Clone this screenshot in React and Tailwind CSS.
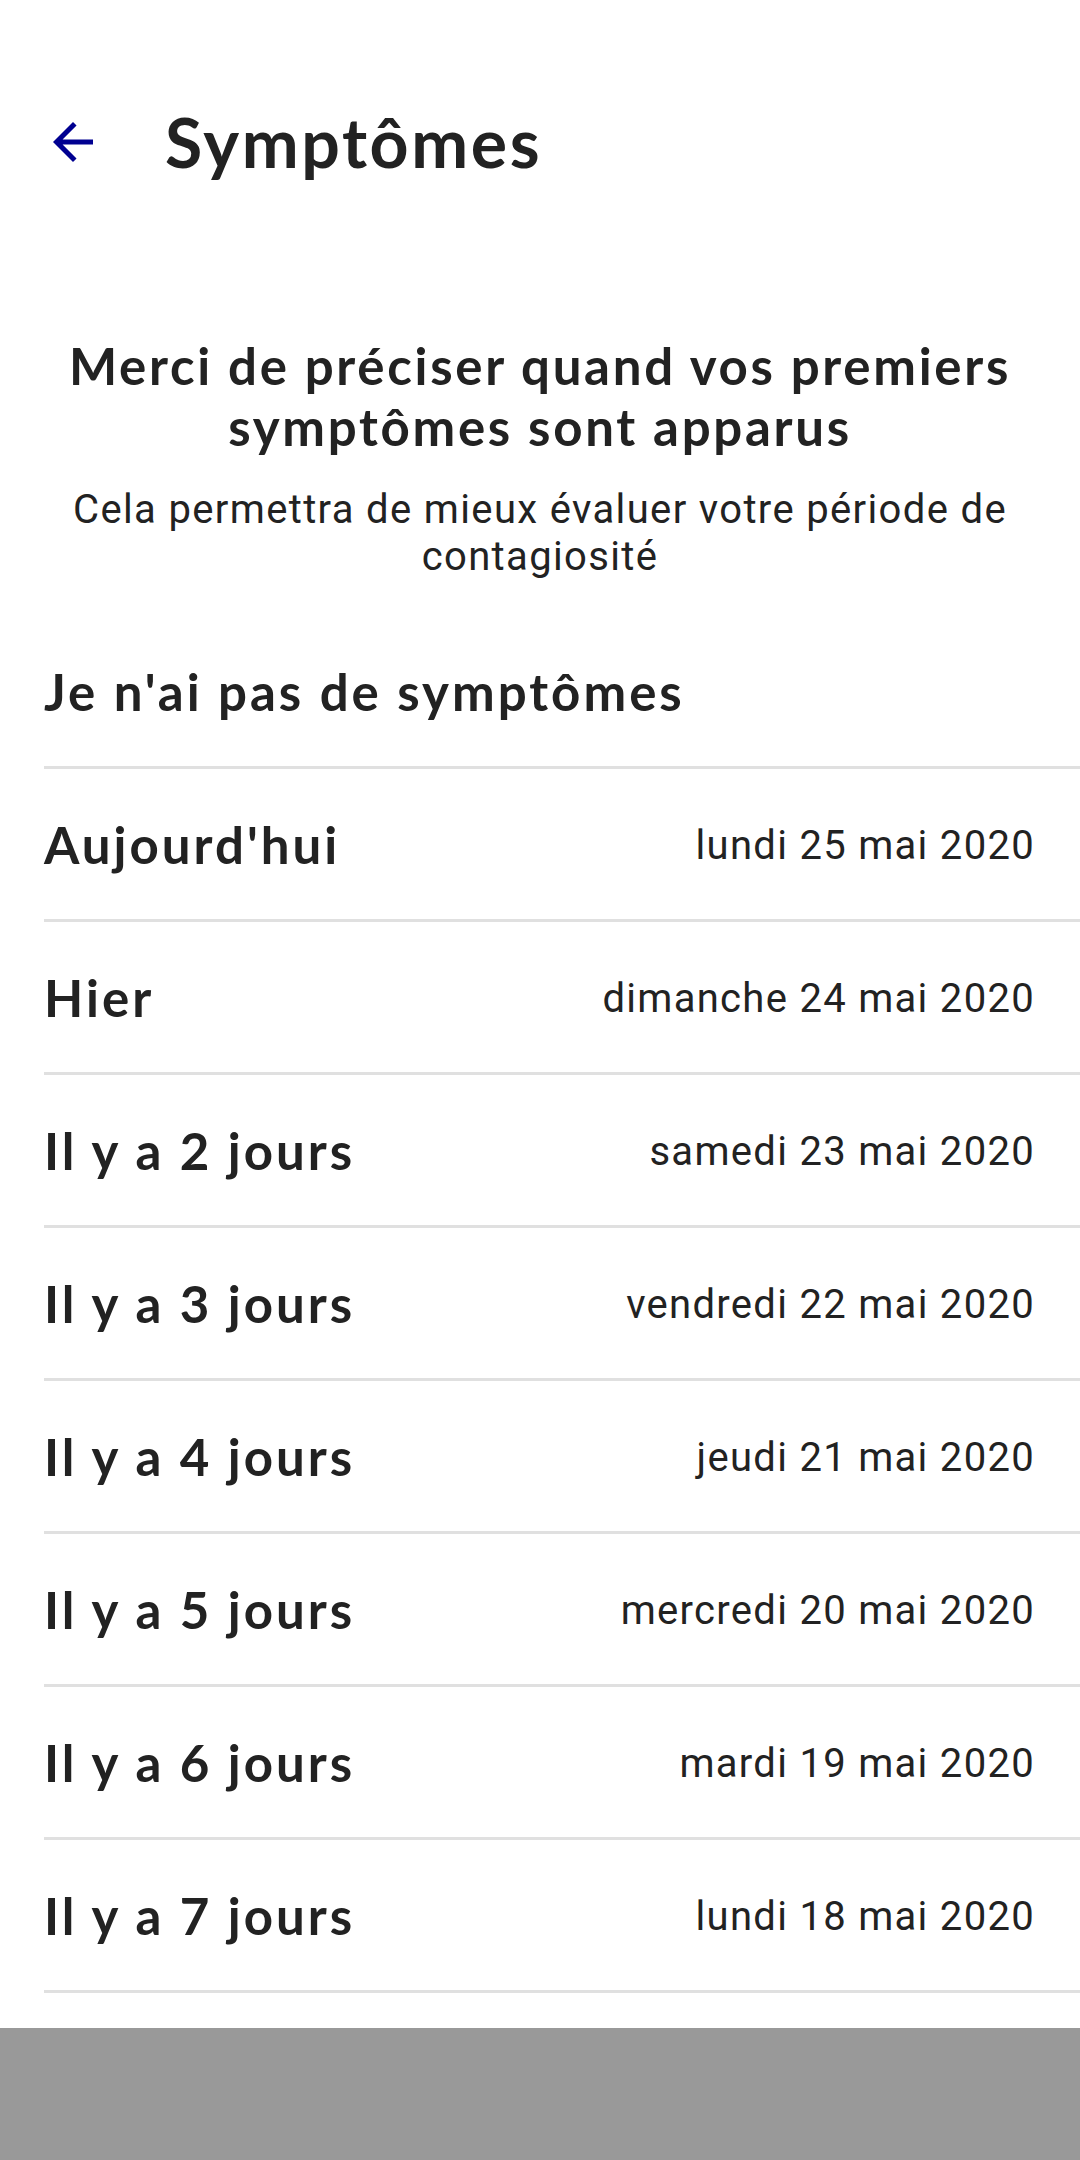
import React from 'react';

const rows = [
  { label: "Je n'ai pas de symptômes", date: '' },
  { label: "Aujourd'hui", date: 'lundi 25 mai 2020' },
  { label: 'Hier', date: 'dimanche 24 mai 2020' },
  { label: 'Il y a 2 jours', date: 'samedi 23 mai 2020' },
  { label: 'Il y a 3 jours', date: 'vendredi 22 mai 2020' },
  { label: 'Il y a 4 jours', date: 'jeudi 21 mai 2020' },
  { label: 'Il y a 5 jours', date: 'mercredi 20 mai 2020' },
  { label: 'Il y a 6 jours', date: 'mardi 19 mai 2020' },
  { label: 'Il y a 7 jours', date: 'lundi 18 mai 2020' },
];

// material arrow_back, 2.5px per unit
const BackArrow = () => (
  <svg width="60" height="60" viewBox="0 0 24 24" fill="#000091">
    <path d="M20 11H7.83l5.59-5.59L12 4l-8 8 8 8 1.41-1.41L7.83 13H20v-2z" />
  </svg>
);

const App = () => {
  return (
    <div className="w-[1080px] h-[2160px] bg-white flex flex-col overflow-hidden text-[#222222]">
      {/* Toolbar */}
      <div className="flex items-center h-[120px] mt-[82px] pl-[43px]">
        <BackArrow />
        <h1 className="ml-[62px] font-['Lato',sans-serif] font-bold text-[68px] tracking-[2.6px] leading-none">
          Symptômes
        </h1>
      </div>

      {/* Intro */}
      <h2 className="mt-[133px] px-[40px] text-center font-['Lato',sans-serif] font-bold text-[51px] leading-[61px] tracking-[2.7px]">
        Merci de préciser quand vos premiers symptômes sont apparus
      </h2>
      <p className="mt-[29px] px-[50px] text-center font-['Roboto',sans-serif] text-[40px] leading-[47px] tracking-[1.35px]">
        Cela permettra de mieux évaluer votre période de contagiosité
      </p>

      {/* Choices */}
      <div className="mt-[36px] flex flex-col">
        {rows.map((row) => (
          <div key={row.label} className="flex flex-col">
            <div className="h-[150px] flex items-center justify-between pl-[44px] pr-[45px]">
              <span className="font-['Lato',sans-serif] font-bold text-[51px] tracking-[3px] leading-none">
                {row.label}
              </span>
              {row.date && (
                <span className="mt-[4px] font-['Roboto',sans-serif] text-[40px] tracking-[1.3px] leading-none">
                  {row.date}
                </span>
              )}
            </div>
            <div className="ml-[44px] h-[3px] bg-[#e0e0e0]" />
          </div>
        ))}
      </div>

      <div className="flex-1" />
      <div className="h-[132px] bg-[#999999]" />
    </div>
  );
};

export default App;
